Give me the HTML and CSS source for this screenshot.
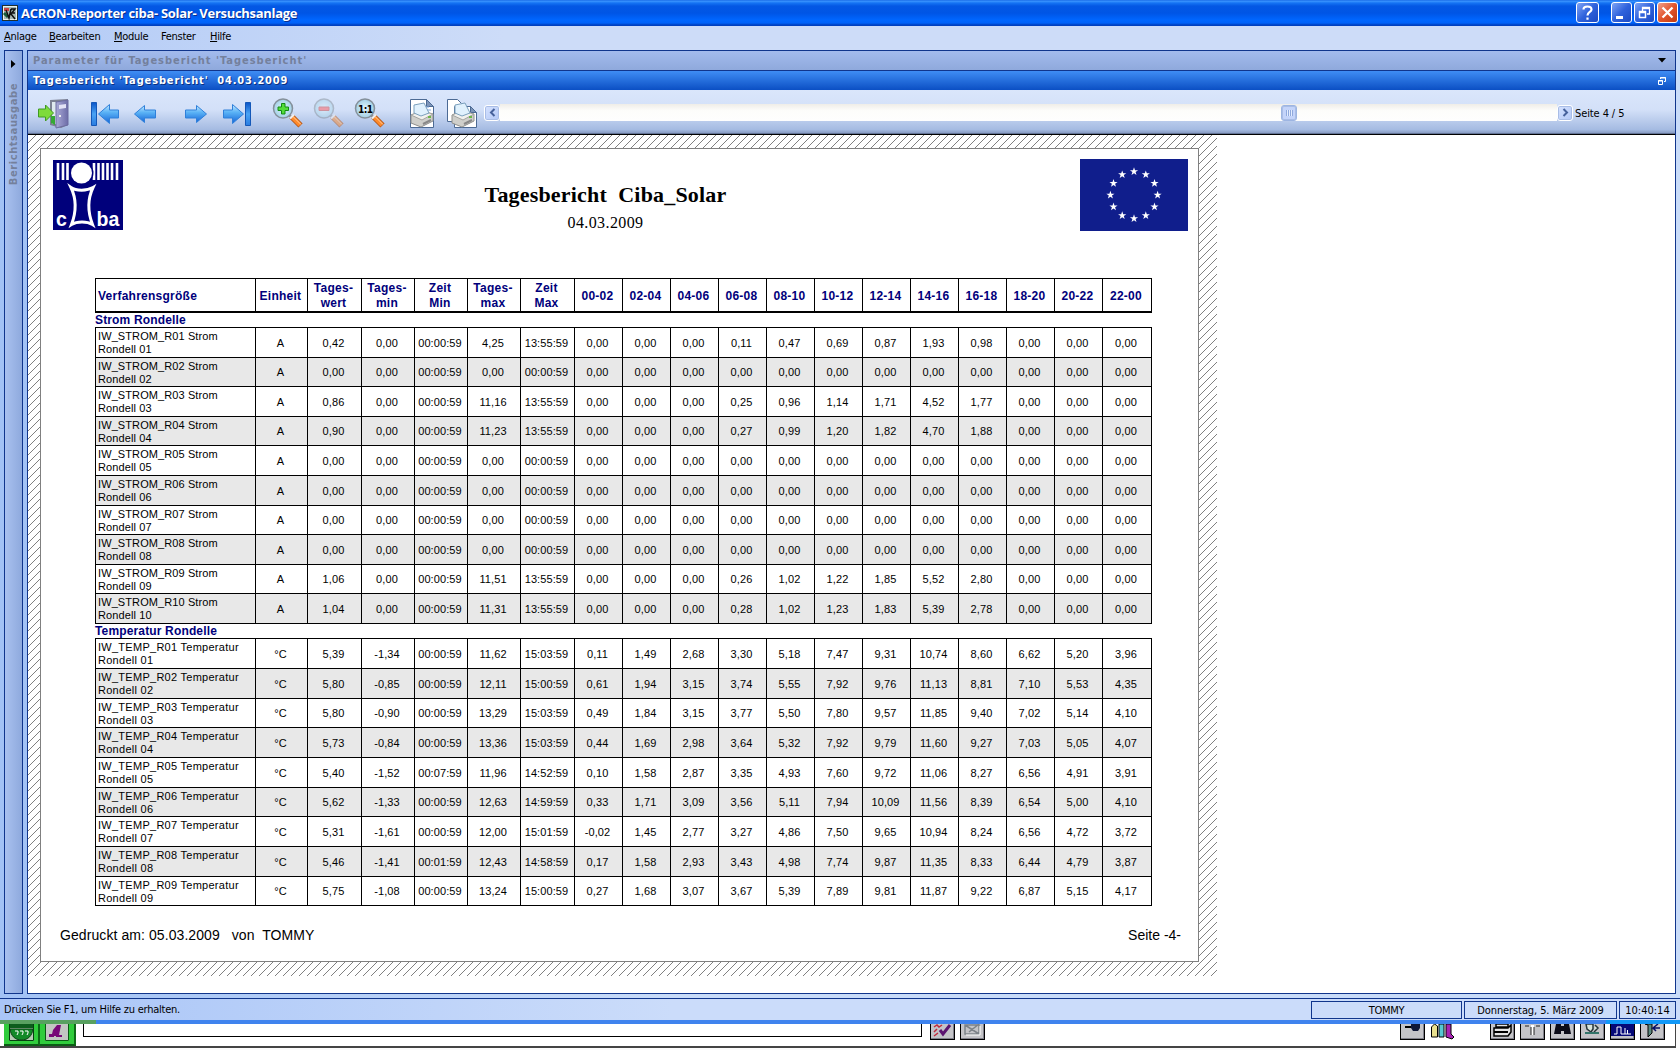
FILE: index.html
```html
<!DOCTYPE html>
<html lang="de">
<head>
<meta charset="utf-8">
<title>ACRON-Reporter</title>
<link rel="stylesheet" href="styles.css">
</head>
<body>
<svg class="defs" width="0" height="0">
  <defs>
    <linearGradient id="blue" x1="0" y1="0" x2="0" y2="1"><stop offset="0" stop-color="#c4e8ff"/><stop offset=".4" stop-color="#5cb4f6"/><stop offset="1" stop-color="#1565d8"/></linearGradient>
    <linearGradient id="bar" x1="0" y1="0" x2="0" y2="1"><stop offset="0" stop-color="#0a55c8"/><stop offset=".5" stop-color="#4aa3f4"/><stop offset="1" stop-color="#2a7ce0"/></linearGradient>
    <radialGradient id="lens"><stop offset="0" stop-color="#e2f6fb"/><stop offset="1" stop-color="#a3d0e6"/></radialGradient>
    <linearGradient id="door"><stop offset="0" stop-color="#a9a9d6"/><stop offset="1" stop-color="#6d6da8"/></linearGradient>
    <g id="magnifier">
      <path d="M17 17l4 4" stroke="#8d8d92" stroke-width="3"/>
      <path d="M19.500 18.500L28.500 27.500" stroke="#b4581c" stroke-width="6"/>
      <path d="M20 19L28 27" stroke="#ff8a2b" stroke-width="4"/>
      <path d="M21 18.500L29 26.500" stroke="#ffd0a0" stroke-width="1"/>
      <path d="M18 20.500l4-4" stroke="#eee" stroke-width="2"/>
      <circle cx="11" cy="10.500" r="9.500" fill="url(#lens)" stroke="#85909a" stroke-width="1.500"/>
    </g>
    <g id="printer">
      <path d="M3 17l10-4 12 3v7l-12 6-10-4z" fill="#cfcfcb" stroke="#8f8f8c"/>
      <path d="M3 17l10-4 12 3-11 6z" fill="#f1f1ee" stroke="#a4a4a0"/>
      <path d="M6 7l10-2 5 10-8 3-7-3z" fill="#e0f1fd" stroke="#7ba0bd"/>
      <path d="M15 26l8-4" stroke="#888" stroke-width="2"/>
      <path d="M20 19h3" stroke="#6db648" stroke-width="2"/>
    </g>
  </defs>
</svg>

<div class="screen">
  <header class="titlebar">
    <svg class="app-icon" width="16" height="16" viewBox="0 0 16 16"><rect width="16" height="16" fill="#20302e"/><rect x="1.500" y="1.500" width="13" height="13" fill="#a7b8b4" stroke="#e9f0ee"/><path d="M2 3h5v3H2z" fill="#c44"/><path d="M2 8l4 4" stroke="#165c3a" stroke-width="3"/><path d="M4 5l3 8 2-9M9 4h4l-4 5 4 5M8 8h5" stroke="#111" stroke-width="1.500" fill="none"/></svg>
    <span class="title">ACRON-Reporter ciba- Solar- Versuchsanlage</span>
    <div class="caption-buttons">
      <span class="cap help"><svg width="21" height="19" viewBox="0 0 21 19"><path d="M6.500 6.500C6.500 2.500 14.500 2.500 14.500 6.500C14.500 9 10.500 9 10.500 12.500M10.500 14.500v2.200" stroke="#fff" stroke-width="2.200" fill="none"/></svg></span>
      <span class="cap"><svg width="19" height="19" viewBox="0 0 19 19"><path d="M4 13h7v3H4z" fill="#fff"/></svg></span>
      <span class="cap"><svg width="19" height="19" viewBox="0 0 19 19"><path d="M7.500 8V4.500H14.500V11H12M7 5.500h8" stroke="#fff" stroke-width="1.300" fill="none"/><path d="M4.500 8.500h6v6h-6zM4 9.500h7" stroke="#fff" stroke-width="1.500" fill="none"/></svg></span>
      <span class="cap close"><svg width="19" height="19" viewBox="0 0 19 19"><path d="M4.500 4.500l10 10M14.500 4.500l-10 10" stroke="#fff" stroke-width="2.300"/></svg></span>
    </div>
  </header>

  <nav class="menubar">
    <span><u>A</u>nlage</span><span><u>B</u>earbeiten</span><span><u>M</u>odule</span><span>Fenster</span><span><u>H</u>ilfe</span>
  </nav>

  <main class="workspace">
    <aside class="rail">
      <svg width="5" height="8" viewBox="0 0 5 8"><path d="M0 0l4.500 4L0 8z" fill="#000"/></svg>
      <span>Berichtsausgabe</span>
    </aside>
    <section class="panel">
      <div class="param-bar"><span>Parameter für Tagesbericht 'Tagesbericht'</span><svg width="8" height="5" viewBox="0 0 8 5"><path d="M0 0h8L4 4.500z" fill="#000"/></svg></div>
      <div class="report-bar"><span>Tagesbericht 'Tagesbericht'&nbsp; 04.03.2009</span><svg width="8" height="8" viewBox="0 0 8 8"><path d="M2.500 2V.5h5v4H6M.5 3.500h4v4h-4zM0 4h5M2 1h6" stroke="#fff" fill="none"/></svg></div>
      <div class="toolbar">
        <svg class="tool" viewBox="0 0 32 32"><path d="M12 2l18-1v26l-7 3-11-3z" fill="#7c8193"/><path d="M14 4h9v22h-9z" fill="#dfe9ee"/><path d="M18 4l12-2v25l-12 3z" fill="url(#door)" stroke="#6c6ca0"/><path d="M21 7l7-1v4l-7 1z" fill="#e2e2f6"/><path d="M21 17h2v2h-2z" fill="#eee"/><path d="M13 18h4v9l-4-2z" fill="#35a835"/><path d="M.5 11h7V7l8 8-8 8v-4h-7z" fill="#7edb3c" stroke="#3f9a22"/></svg>
        <svg class="tool t-first" viewBox="0 0 32 32"><path d="M2.500 4.500h5v23h-5z" fill="url(#bar)" stroke="#1458b8"/><path d="M9.500 16L20.500 6.500V12H29.500v8H20.500v5.500z" fill="url(#blue)" stroke="#2f80da"/></svg>
        <svg class="tool t-prev" viewBox="0 0 32 32"><path d="M5.500 16L15.500 7.500V12H26.500v8H15.500v4.500z" fill="url(#blue)" stroke="#2f80da"/></svg>
        <svg class="tool t-next" viewBox="0 0 32 32"><path d="M26.500 16L16.500 7.500V12H5.500v8H16.500v4.500z" fill="url(#blue)" stroke="#2f80da"/></svg>
        <svg class="tool t-last" viewBox="0 0 32 32"><path d="M24.500 4.500h5v23h-5z" fill="url(#bar)" stroke="#1458b8"/><path d="M22.500 16L11.500 6.500V12H2.500v8H11.500v5.500z" fill="url(#blue)" stroke="#2f80da"/></svg>
        <svg class="tool t-in" viewBox="0 0 32 32"><use href="#magnifier"/><path d="M9.500 5.500h3.500v3.500h3.500v3.500h-3.500v3.500H9.500v-3.500H6v-3.500h3.500z" fill="#52dc38" stroke="#128a12"/></svg>
        <svg class="tool t-out faded" viewBox="0 0 32 32"><use href="#magnifier"/><path d="M6 9h10v3.500H6z" fill="#ff5a5a" stroke="#c84848"/></svg>
        <svg class="tool t-full" viewBox="0 0 32 32"><use href="#magnifier"/><text x="4" y="14.500" class="ratio">1:1</text></svg>
        <svg class="tool t-print" viewBox="0 0 32 32"><path d="M3.500 1.500h16l7 7v21h-23z" fill="#fff" stroke="#4c6a94"/><path d="M19.500 1.500v7h7z" fill="#7d95b8" stroke="#4c6a94"/><path d="M17 9h5M19 12h5" stroke="#7fa8e0"/><use href="#printer" x="1"/></svg>
        <svg class="tool t-pages" viewBox="0 0 32 32"><path d="M1.500 1.500h10l4 4v18h-14z" fill="#fff" stroke="#4c6a94"/><path d="M8.500 8.500h16l6 6v15h-22z" fill="#fff" stroke="#4c6a94"/><path d="M24.500 8.500v6h6z" fill="#7d95b8" stroke="#4c6a94"/><use href="#printer" x="3"/></svg>
        <div class="scroll">
          <span class="scroll-btn"><svg width="7" height="9" viewBox="0 0 7 9"><path d="M5.500 1L2 4.500L5.500 8" stroke="#46619b" stroke-width="2" fill="none"/></svg></span>
          <div class="track"><span class="thumb"></span></div>
          <span class="scroll-btn"><svg width="7" height="9" viewBox="0 0 7 9"><path d="M1.500 1L5 4.500L1.500 8" stroke="#46619b" stroke-width="2" fill="none"/></svg></span>
        </div>
        <span class="page-count">Seite 4 / 5</span>
      </div>

      <div class="canvas">
        <div class="hatch">
          <article class="paper">
            <div class="paper-head">
              <svg class="ciba" width="70" height="70" viewBox="0 0 70 70"><rect width="70" height="70" fill="#00007b"/><path d="M5 3v17M10 3v17M14.500 3v17M41 3v17M45.500 3v17M50 3v17M54.500 3v17M59 3v17M64 3v17" stroke="#fff" stroke-width="2.600"/><circle cx="28.500" cy="13" r="12" fill="#00007b"/><circle cx="28.500" cy="13" r="10.500" fill="#fff"/><path d="M18 27.500C23 31 34 31 40 27.500C35 38 34 50 39.500 64.500C34 61 24 61 18.500 64.500C24 50 23 38 18 27.500Z" fill="none" stroke="#fff" stroke-width="3"/><text x="3" y="66" class="ciba-text">c</text><text x="43.500" y="66" class="ciba-text">ba</text></svg>
              <div class="heading"><h1>Tagesbericht&nbsp; Ciba_Solar</h1><p>04.03.2009</p></div>
              <svg class="flag" width="108" height="72" viewBox="0 0 108 72"><defs><path id="star" d="M0-4.200L1-1.300H4.100L1.600.5L2.500 3.500L0 1.700L-2.500 3.500L-1.600.5L-4.100-1.300H-1Z" fill="#fff"/></defs><rect width="108" height="72" fill="#101e8c"/><use href="#star" x="54" y="12.500"/><use href="#star" x="65.800" y="15.600"/><use href="#star" x="74.500" y="24.200"/><use href="#star" x="77.600" y="36"/><use href="#star" x="74.500" y="47.800"/><use href="#star" x="65.800" y="56.500"/><use href="#star" x="54" y="59.500"/><use href="#star" x="42.200" y="56.500"/><use href="#star" x="33.500" y="47.800"/><use href="#star" x="30.400" y="36"/><use href="#star" x="33.500" y="24.200"/><use href="#star" x="42.200" y="15.600"/></svg>
            </div>

            <div class="tables">
              <table class="grid head">
                <tr><th>Verfahrensgröße<th>Einheit<th>Tages-<br>wert<th>Tages-<br>min<th>Zeit<br>Min<th>Tages-<br>max<th>Zeit<br>Max<th>00-02<th>02-04<th>04-06<th>06-08<th>08-10<th>10-12<th>12-14<th>14-16<th>16-18<th>18-20<th>20-22<th>22-00
              </table>
              <h2>Strom Rondelle</h2>
              <table class="grid strom">
                <tr><td>IW_STROM_R01 Strom<br>Rondell 01<td>A<td>0,42<td>0,00<td>00:00:59<td>4,25<td>13:55:59<td>0,00<td>0,00<td>0,00<td>0,11<td>0,47<td>0,69<td>0,87<td>1,93<td>0,98<td>0,00<td>0,00<td>0,00
                <tr><td>IW_STROM_R02 Strom<br>Rondell 02<td>A<td>0,00<td>0,00<td>00:00:59<td>0,00<td>00:00:59<td>0,00<td>0,00<td>0,00<td>0,00<td>0,00<td>0,00<td>0,00<td>0,00<td>0,00<td>0,00<td>0,00<td>0,00
                <tr><td>IW_STROM_R03 Strom<br>Rondell 03<td>A<td>0,86<td>0,00<td>00:00:59<td>11,16<td>13:55:59<td>0,00<td>0,00<td>0,00<td>0,25<td>0,96<td>1,14<td>1,71<td>4,52<td>1,77<td>0,00<td>0,00<td>0,00
                <tr><td>IW_STROM_R04 Strom<br>Rondell 04<td>A<td>0,90<td>0,00<td>00:00:59<td>11,23<td>13:55:59<td>0,00<td>0,00<td>0,00<td>0,27<td>0,99<td>1,20<td>1,82<td>4,70<td>1,88<td>0,00<td>0,00<td>0,00
                <tr><td>IW_STROM_R05 Strom<br>Rondell 05<td>A<td>0,00<td>0,00<td>00:00:59<td>0,00<td>00:00:59<td>0,00<td>0,00<td>0,00<td>0,00<td>0,00<td>0,00<td>0,00<td>0,00<td>0,00<td>0,00<td>0,00<td>0,00
                <tr><td>IW_STROM_R06 Strom<br>Rondell 06<td>A<td>0,00<td>0,00<td>00:00:59<td>0,00<td>00:00:59<td>0,00<td>0,00<td>0,00<td>0,00<td>0,00<td>0,00<td>0,00<td>0,00<td>0,00<td>0,00<td>0,00<td>0,00
                <tr><td>IW_STROM_R07 Strom<br>Rondell 07<td>A<td>0,00<td>0,00<td>00:00:59<td>0,00<td>00:00:59<td>0,00<td>0,00<td>0,00<td>0,00<td>0,00<td>0,00<td>0,00<td>0,00<td>0,00<td>0,00<td>0,00<td>0,00
                <tr><td>IW_STROM_R08 Strom<br>Rondell 08<td>A<td>0,00<td>0,00<td>00:00:59<td>0,00<td>00:00:59<td>0,00<td>0,00<td>0,00<td>0,00<td>0,00<td>0,00<td>0,00<td>0,00<td>0,00<td>0,00<td>0,00<td>0,00
                <tr><td>IW_STROM_R09 Strom<br>Rondell 09<td>A<td>1,06<td>0,00<td>00:00:59<td>11,51<td>13:55:59<td>0,00<td>0,00<td>0,00<td>0,26<td>1,02<td>1,22<td>1,85<td>5,52<td>2,80<td>0,00<td>0,00<td>0,00
                <tr><td>IW_STROM_R10 Strom<br>Rondell 10<td>A<td>1,04<td>0,00<td>00:00:59<td>11,31<td>13:55:59<td>0,00<td>0,00<td>0,00<td>0,28<td>1,02<td>1,23<td>1,83<td>5,39<td>2,78<td>0,00<td>0,00<td>0,00
              </table>
              <h2>Temperatur Rondelle</h2>
              <table class="grid temp">
                <tr><td>IW_TEMP_R01 Temperatur<br>Rondell 01<td>°C<td>5,39<td>-1,34<td>00:00:59<td>11,62<td>15:03:59<td>0,11<td>1,49<td>2,68<td>3,30<td>5,18<td>7,47<td>9,31<td>10,74<td>8,60<td>6,62<td>5,20<td>3,96
                <tr><td>IW_TEMP_R02 Temperatur<br>Rondell 02<td>°C<td>5,80<td>-0,85<td>00:00:59<td>12,11<td>15:00:59<td>0,61<td>1,94<td>3,15<td>3,74<td>5,55<td>7,92<td>9,76<td>11,13<td>8,81<td>7,10<td>5,53<td>4,35
                <tr><td>IW_TEMP_R03 Temperatur<br>Rondell 03<td>°C<td>5,80<td>-0,90<td>00:00:59<td>13,29<td>15:03:59<td>0,49<td>1,84<td>3,15<td>3,77<td>5,50<td>7,80<td>9,57<td>11,85<td>9,40<td>7,02<td>5,14<td>4,10
                <tr><td>IW_TEMP_R04 Temperatur<br>Rondell 04<td>°C<td>5,73<td>-0,84<td>00:00:59<td>13,36<td>15:03:59<td>0,44<td>1,69<td>2,98<td>3,64<td>5,32<td>7,92<td>9,79<td>11,60<td>9,27<td>7,03<td>5,05<td>4,07
                <tr><td>IW_TEMP_R05 Temperatur<br>Rondell 05<td>°C<td>5,40<td>-1,52<td>00:07:59<td>11,96<td>14:52:59<td>0,10<td>1,58<td>2,87<td>3,35<td>4,93<td>7,60<td>9,72<td>11,06<td>8,27<td>6,56<td>4,91<td>3,91
                <tr><td>IW_TEMP_R06 Temperatur<br>Rondell 06<td>°C<td>5,62<td>-1,33<td>00:00:59<td>12,63<td>14:59:59<td>0,33<td>1,71<td>3,09<td>3,56<td>5,11<td>7,94<td>10,09<td>11,56<td>8,39<td>6,54<td>5,00<td>4,10
                <tr><td>IW_TEMP_R07 Temperatur<br>Rondell 07<td>°C<td>5,31<td>-1,61<td>00:00:59<td>12,00<td>15:01:59<td>-0,02<td>1,45<td>2,77<td>3,27<td>4,86<td>7,50<td>9,65<td>10,94<td>8,24<td>6,56<td>4,72<td>3,72
                <tr><td>IW_TEMP_R08 Temperatur<br>Rondell 08<td>°C<td>5,46<td>-1,41<td>00:01:59<td>12,43<td>14:58:59<td>0,17<td>1,58<td>2,93<td>3,43<td>4,98<td>7,74<td>9,87<td>11,35<td>8,33<td>6,44<td>4,79<td>3,87
                <tr><td>IW_TEMP_R09 Temperatur<br>Rondell 09<td>°C<td>5,75<td>-1,08<td>00:00:59<td>13,24<td>15:00:59<td>0,27<td>1,68<td>3,07<td>3,67<td>5,39<td>7,89<td>9,81<td>11,87<td>9,22<td>6,87<td>5,15<td>4,17
              </table>
            </div>

            <footer class="paper-foot"><span class="printed">Gedruckt am: 05.03.2009&nbsp;&nbsp; von&nbsp; TOMMY</span><span>Seite -4-</span></footer>
          </article>
        </div>
      </div>
    </section>
  </main>

  <footer class="statusbar">
    <span class="hint">Drücken Sie F1, um Hilfe zu erhalten.</span>
    <span class="pane user">TOMMY</span><span class="pane date">Donnerstag, 5. März 2009</span><span class="pane clock">10:40:14</span>
  </footer>

  <div class="behind">
    <div class="behind-tools">
      <span class="green"><svg width="25" height="17" viewBox="0 0 25 17"><rect width="25" height="17" fill="#b7cbb5"/><path d="M0 0h25v4H0z" fill="#0c5c1c"/><path d="M1 5h23c-1 7-5 11-11.500 11S2 12 1 5z" fill="#128a28" stroke="#063d10"/><path d="M6 7h3v2l-1 2M11 7h3v2l-1 2M16 7h3v2l-1 2" stroke="#fff" fill="none"/><path d="M.5 0v16.500h24V0" stroke="#063d10" fill="none"/></svg></span>
      <span class="green second"><svg width="24" height="17" viewBox="0 0 24 17"><path d="M0 0h24v17H0z" fill="#c2c6c2"/><path d="M.5 0v16.500h23V0" stroke="#0a5a14" fill="none"/><path d="M16 1h-4L8 6 7 10H4v3h5v-1h2v1h6v-2h-3z" fill="#780878"/></svg></span>
      <span class="field"></span>
      <span class="btn b1"><svg width="23" height="14" viewBox="0 0 23 14"><path d="M3 3l3-2 2 2 3-2M3 8l3-3M3 12l4-3" stroke="#c22a3c" stroke-width="1.500" fill="none"/><path d="M9 6l3 4 7-9" stroke="#5c1470" stroke-width="3" fill="none"/></svg></span>
      <span class="btn b2"><svg width="23" height="14" viewBox="0 0 23 14"><path d="M4 1h14v9H4zM4 1l14 9M18 0L8 8" stroke="#7c8288" stroke-width="1.500" fill="none"/><path d="M5 11h14V2" stroke="#fff" fill="none"/></svg></span>
      <span class="btn b3"><svg width="23" height="14" viewBox="0 0 23 14"><path d="M4 3h8" stroke="#000" stroke-width="2"/><path d="M10 0h9v4l-2 3h-5l-2-3z" fill="#101838"/></svg></span>
      <span class="books"><svg width="25" height="16" viewBox="0 0 25 16"><path d="M1.500 3l3-3 3 2v11h-6z" fill="#e9e08e" stroke="#000"/><path d="M9 0h5v13H9z" fill="#56c8d2" stroke="#000"/><path d="M16 0h5v10l3 3-2 2-6-2z" fill="#a822b4" stroke="#000"/></svg></span>
      <span class="btn b5"><svg width="23" height="14" viewBox="0 0 23 14"><path d="M5 0h12v3H5zM3 4h14l3-3v7l-3 4H3z" fill="#e4e4e4" stroke="#000" stroke-width="1.500"/><path d="M3 8h14" stroke="#000" stroke-width="2"/></svg></span>
      <span class="btn b6"><svg width="23" height="14" viewBox="0 0 23 14"><path d="M11.500 1v10" stroke="#fff" stroke-width="3"/><path d="M4 2h4M15 2h4M10 3v8M13 3v8" stroke="#222"/></svg></span>
      <span class="btn b7"><svg width="23" height="14" viewBox="0 0 23 14"><path d="M5 0h5v2h3V0h5l2 10h-7V7h-3v3H3z" fill="#0b0b18"/></svg></span>
      <span class="btn b8"><svg width="23" height="14" viewBox="0 0 23 14"><path d="M5 0h7v5l-2 3-4-3zM14 1l3 3-4 4" stroke="#27363a" stroke-width="1.500" fill="#d9e4dc"/><path d="M4 9h14" stroke="#32746a" stroke-width="2"/></svg></span>
      <span class="btn b9"><svg width="23" height="14" viewBox="0 0 23 14"><path d="M0 0h23v12H0z" fill="#060a78"/><path d="M3 10h3V3h4v7h4V4M14 10h6M16.500 6v4" stroke="#fff" fill="none"/></svg></span>
      <span class="btn b10"><svg width="23" height="14" viewBox="0 0 23 14"><path d="M4 0h7v9l-4 4V1z" fill="#5c8a80" stroke="#000"/><path d="M17 0l-5 4h7M12 4l3 3" stroke="#091064" stroke-width="1.500" fill="none"/></svg></span>
    </div>
  </div>
</div>
</body>
</html>
```
FILE: styles.css
```css
* { box-sizing: border-box; }
html, body { margin: 0; }
body { width: 1680px; height: 1050px; overflow: hidden; font-family: "DejaVu Sans Condensed", "DejaVu Sans", sans-serif; font-size: 11px; color: #000; }
svg { display: block; flex: none; }
.screen { display: flex; flex-direction: column; height: 1050px; background: linear-gradient(90deg, #a2c2f5, #c9dcf9 40%); }

/* Title bar */
.titlebar { display: flex; align-items: center; height: 26px; padding: 0 2px 1px; background: linear-gradient(#0d5de0 0, #3d97ff 1px, #1574f4 3px, #0458e4 6px, #0055e5 13px, #0066ff 20px, #0062f8 23px, #0040c0 25px); }
.title { margin-left: 3px; font: bold 13px "Open Sans", sans-serif; letter-spacing: -.3px; color: #fff; text-shadow: 1px 1px 0 #0c2f8c; white-space: nowrap; }
.caption-buttons { display: flex; gap: 2px; margin-left: auto; }
.cap { display: flex; justify-content: center; align-items: center; width: 21px; height: 21px; border: 1px solid #fff; border-radius: 3px; background: linear-gradient(135deg, #7fa4f5, #2f62dc 50%, #1b4ac4); }
.cap.help { width: 23px; margin-right: 10px; }
.cap.close { background: linear-gradient(135deg, #f0a08c, #e2542c 50%, #c03a10); }

/* Menu */
.menubar { display: flex; height: 24px; padding: 3px 0 0 4px; line-height: 16px; background: linear-gradient(90deg, #b3cbf6, #cddcf8 30%); }
.menubar span { letter-spacing: -.3px; }
.menubar span:nth-child(1) { width: 45px; }
.menubar span:nth-child(2) { width: 65px; }
.menubar span:nth-child(3) { width: 47px; }
.menubar span:nth-child(4) { width: 49px; }

/* Docked area */
.workspace { display: flex; height: 948px; padding: 0 4px 4px; gap: 4px; }
.rail { display: flex; flex-direction: column; align-items: center; width: 19px; padding-top: 9px; border: 1px solid #10358c; background: linear-gradient(90deg, #a9c1ef, #8ea9dd); }
.rail span { margin-top: 15px; writing-mode: vertical-rl; transform: rotate(180deg); font-weight: bold; letter-spacing: .6px; line-height: 14px; color: #74809c; }
.panel { display: flex; flex-direction: column; flex: 1; border: 1px solid #10358c; background: #fff; min-width: 0; }
.param-bar, .report-bar { display: flex; align-items: center; justify-content: space-between; padding: 0 9px 0 5px; font-weight: bold; white-space: nowrap; }
.param-bar { height: 20px; border-bottom: 1px solid #10358c; background: linear-gradient(#a3bbed, #8fa9dc); color: #74809c; letter-spacing: .98px; }
.report-bar { height: 19px; background: linear-gradient(#3f8df4, #0b4fc4); color: #fff; text-shadow: 1px 1px 0 #0a2f80; letter-spacing: .86px; }
.toolbar { display: flex; align-items: center; height: 45px; padding: 1px 0 0 10px; border-bottom: 1px solid #000; background: linear-gradient(#dae6fb 0, #d3e0f8 45%, #a5bbe2 90%, #8b9fc6 97%, #4a5878); }
.tool { width: 32px; height: 32px; margin-top: 2px; }
.t-first, .t-next, .t-in { margin-left: 19px; }
.t-prev { margin-left: 8px; }
.t-last, .t-out, .t-full { margin-left: 9px; }
.t-print { margin-left: 21px; }
.t-pages { margin-left: 7px; }
.faded { opacity: .5; }
.ratio { font: bold 10px "DejaVu Sans Condensed", sans-serif; letter-spacing: -.5px; fill: #000; }
.scroll { display: flex; align-items: center; width: 1089px; height: 17px; margin-left: 6px; }
.scroll-btn, .thumb { display: flex; align-items: center; justify-content: center; width: 16px; height: 16px; border: 1px solid #fff; border-radius: 3px; background: linear-gradient(135deg, #d5e2ff, #b3c8f6); box-shadow: 0 0 0 1px #a9bde6 inset; }
.track { display: flex; align-items: center; flex: 1; height: 17px; padding-left: 781px; background: linear-gradient(#efede8, #fdfdfb 40%, #fefefe); }
.thumb { border-color: #9db5e2; background: repeating-linear-gradient(90deg, #8fa9dd 0 1px, #e4edff 1px 2px) 4px 4px / 7px 6px no-repeat, #c4d4fa; }
.page-count { margin: 1px 0 0 2px; letter-spacing: -.1px; }

/* Preview */
.canvas { flex: 1; background: #fff; }
.hatch { width: 1189px; height: 841px; padding: 13px 18px 14px 12px; background: url("data:image/svg+xml,%3Csvg xmlns='http://www.w3.org/2000/svg' width='8' height='8' shape-rendering='crispEdges'%3E%3Cpath d='M0 7h1v1H0zM1 6h1v1H1zM2 5h1v1H2zM3 4h1v1H3zM4 3h1v1H4zM5 2h1v1H5zM6 1h1v1H6zM7 0h1v1H7z' fill='%23808080'/%3E%3C/svg%3E"); }
.paper { display: flex; flex-direction: column; height: 814px; border: 1px solid #808080; background: #fff; }
.paper-head { display: flex; height: 129px; padding: 10px 10px 0 12px; }
.ciba { margin-top: 1px; }
.ciba-text { font: bold 19.5px "Liberation Sans", sans-serif; fill: #fff; }
.heading { flex: 1; padding: 22px 0 0 8px; text-align: center; font-family: "Liberation Serif", serif; }
.heading h1 { margin: 0; font-size: 22px; line-height: 28px; letter-spacing: .18px; }
.heading p { margin: 0; font-size: 16px; line-height: 28px; letter-spacing: .4px; }
.tables { padding-left: 54px; font-family: "Liberation Sans", Arial, sans-serif; }
.grid { width: 1057px; border-collapse: collapse; table-layout: fixed; }
.grid th, .grid td { width: 48px; padding: 2px 2px 0 0; border: 1px solid #000; text-align: center; vertical-align: middle; white-space: nowrap; }
.grid td { font-size: 11px; line-height: 13px; letter-spacing: .1px; }
.grid th { padding: 3px 2px 0 0; font-size: 12px; line-height: 15px; letter-spacing: .25px; color: #00007b; }
.grid th:nth-child(n+3):nth-child(-n+7) { padding-top: 1px; vertical-align: bottom; }
.grid :is(th, td):nth-child(1) { width: 160px; padding-left: 2px; text-align: left; }
.grid :is(th, td):nth-child(2) { width: 52px; }
.grid :is(th, td):nth-child(3), .grid :is(th, td):nth-child(7) { width: 54px; }
.grid :is(th, td):nth-child(n+4):nth-child(-n+6) { width: 53px; }
.grid :is(th, td):nth-child(19) { width: 49px; }
.grid tr { height: 30px; }
.grid.head { border-bottom: 2px solid #000; }
.grid.head tr { height: 33px; }
.strom tr:nth-child(2), .strom tr:nth-child(4), .strom tr:nth-child(7), .strom tr:nth-child(9), .temp tr:nth-child(3n) { height: 29px; }
.grid tr:nth-child(even) { background: #e8e8e8; }
.temp td:first-child { letter-spacing: .27px; }
.tables h2 { height: 14px; margin: 0; font-size: 12px; line-height: 15px; letter-spacing: .15px; color: #00007b; }
.paper-foot { display: flex; justify-content: space-between; padding: 20px 17px 0 19px; font: 14px/18px "Liberation Sans", Arial, sans-serif; }
.printed { letter-spacing: .08px; }

/* Status bar */
.statusbar { display: flex; height: 22px; gap: 2px; padding: 2px 4px 2px 4px; border-top: 1px solid #10358c; background: linear-gradient(90deg, #a9c5f7, #cbdcfa 40%); line-height: 18px; }
.hint { flex: 1; letter-spacing: -.23px; }
.pane { border: 1px solid #10358c; text-align: center; line-height: 17px; height: 18px; }
.user { width: 151px; letter-spacing: -.3px; }
.date { width: 153px; letter-spacing: -.1px; }
.clock { width: 57px; }

/* Window underneath */
.behind { height: 30px; padding-top: 4px; background: linear-gradient(90deg, #58a060 0 96px, #3f83ee 96px 1606px, #1098f8 1606px) 0 0 / 100% 4px no-repeat, #fafafa; }
.behind-tools { display: flex; width: 1676px; height: 24px; padding-left: 4px; border-right: 1px solid #444; border-bottom: 2px solid #444; background: #fff; }
.green { width: 36px; height: 22px; padding-left: 5px; border-right: 2px solid #0c6b16; border-bottom: 2px solid #0a5a14; background: #30cc3c; }
.field { width: 839px; height: 13px; margin-left: 7px; border: 1px solid #000; border-top: 0; }
.btn { width: 25px; height: 16px; border: 1px solid #000; border-top: 0; background: #c4c4c8; box-shadow: -1px -1px 0 #80808a inset; }
.b1 { margin-left: 8px; }
.b2 { margin-left: 5px; }
.b3 { margin-left: 415px; }
.books { margin-left: 5px; }
.b5 { margin-left: 35px; }
.b6, .b7, .b8, .b9, .b10 { margin-left: 5px; }
.defs { position: absolute; }
```
